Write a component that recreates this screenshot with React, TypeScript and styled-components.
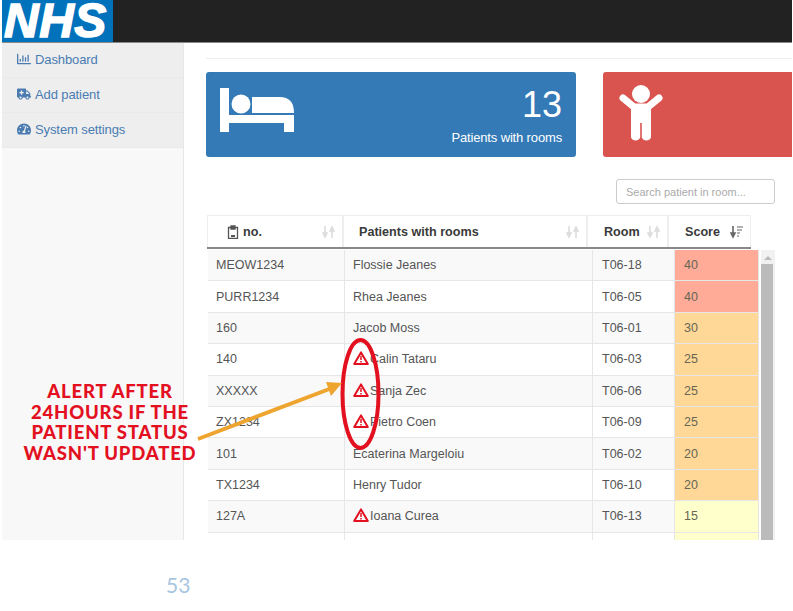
import React from 'react';
import styled, { createGlobalStyle } from 'styled-components';
import { FaAmbulance, FaTachometerAlt, FaRegChartBar } from 'react-icons/fa';

interface Patient {
  no: string;
  name: string;
  room: string;
  score: number | null;
  alert?: boolean;
}

const patients: Patient[] = [
  { no: 'MEOW1234', name: 'Flossie Jeanes', room: 'T06-18', score: 40 },
  { no: 'PURR1234', name: 'Rhea Jeanes', room: 'T06-05', score: 40 },
  { no: '160', name: 'Jacob Moss', room: 'T06-01', score: 30 },
  { no: '140', name: 'Calin Tataru', room: 'T06-03', score: 25, alert: true },
  { no: 'XXXXX', name: 'Sanja Zec', room: 'T06-06', score: 25, alert: true },
  { no: 'ZX1234', name: 'Pietro Coen', room: 'T06-09', score: 25, alert: true },
  { no: '101', name: 'Ecaterina Margeloiu', room: 'T06-02', score: 20 },
  { no: 'TX1234', name: 'Henry Tudor', room: 'T06-10', score: 20 },
  { no: '127A', name: 'Ioana Curea', room: 'T06-13', score: 15, alert: true },
  { no: '', name: '', room: '', score: null, alert: true },
];

const scoreColor = (score: number | null) => {
  if (score === null || score < 20) return '#ffffcc';
  if (score >= 40) return '#ffab97';
  return '#ffd898';
};

const SortIcon: React.FC<{ active?: boolean }> = ({ active }) => (
  <svg width="14" height="14" viewBox="0 0 14 14">
    <path d="M3 1v9M1 8l2 4 2-4z" stroke={active ? '#666' : '#ddd'} fill={active ? '#666' : '#ddd'} strokeWidth="1.6" />
    {active ? (
      <path d="M7 2h6M7 5h5M7 8h3M7 11h2" stroke="#999" strokeWidth="1.6" />
    ) : (
      <path d="M10 13V4M8 6l2-4 2 4z" stroke="#ddd" fill="#ddd" strokeWidth="1.6" />
    )}
  </svg>
);

const AlertIcon = () => (
  <svg width="16" height="14" viewBox="0 0 16 14">
    <path d="M8 1.4 14.8 13H1.2z" fill="#fff" stroke="#e3101f" strokeWidth="2" strokeLinejoin="round" />
    <path d="M8 5v4M8 10v1.6" stroke="#e3101f" strokeWidth="1.5" />
  </svg>
);

const App: React.FC = () => (
  <Page>
    <GlobalStyle />
    <Frame>
      <TopBar>
        <Logo>NHS</Logo>
      </TopBar>
      <Body>
        <Sidebar>
          <MenuItem><FaRegChartBar size={14} />Dashboard</MenuItem>
          <MenuItem><FaAmbulance size={14} />Add patient</MenuItem>
          <MenuItem><FaTachometerAlt size={14} />System settings</MenuItem>
        </Sidebar>
        <Main>
          <Rule />
          <Cards>
            <Card $color="#337ab7">
              <svg width="75" height="47" viewBox="0 0 75 47" fill="#fff">
                <path d="M1 3h9v27h65v17H65v-9H10v9H1z" />
                <circle cx="22" cy="19" r="9.5" />
                <path d="M33 12h28c9 0 14 5 14 16H33z" />
              </svg>
              <CardText>
                <CardNumber>13</CardNumber>
                <CardLabel>Patients with rooms</CardLabel>
              </CardText>
            </Card>
            <Card $color="#d9534f">
              <svg width="50" height="58" viewBox="0 0 50 58" fill="#fff">
                <circle cx="25" cy="9" r="9" />
                <path d="M7 13 18 22h14L43 13" stroke="#fff" strokeWidth="7" strokeLinecap="round" strokeLinejoin="round" fill="none" />
                <path d="M15 20h20v32.500a5 5 0 0 1-9.200 0V38h-1.600v14.500a5 5 0 0 1-9.200 0z" />
              </svg>
            </Card>
          </Cards>
          <SearchRow>
            <SearchInput placeholder="Search patient in room..." />
          </SearchRow>
          <TableArea>
            <HeadRow>
              <HeadCell $width={136}>
                <HeadLabel $indent={19}>
                  <svg width="12" height="14" viewBox="0 0 12 14">
                    <path d="M1.500 2.500h9v11h-9zM4 1h4v3H4z" fill="#fff" stroke="#555" strokeWidth="1.300" />
                    <path d="M4 10h4v2H4z" fill="#555" />
                  </svg>
                  no.
                </HeadLabel>
                <SortIcon />
              </HeadCell>
              <HeadCell $width={244}>
                <HeadLabel $indent={15}>Patients with rooms</HeadLabel>
                <SortIcon />
              </HeadCell>
              <HeadCell $width={81}>
                <HeadLabel $indent={16}>Room</HeadLabel>
                <SortIcon />
              </HeadCell>
              <HeadCell $width={83}>
                <HeadLabel $indent={16}>Score</HeadLabel>
                <SortIcon active />
              </HeadCell>
            </HeadRow>
            <ScrollArea>
              <Rows>
                {patients.map((p, i) => (
                  <Row key={i} $odd={i % 2 === 0}>
                    <NoCell>{p.no}</NoCell>
                    <NameCell>
                      {p.alert && <AlertIcon />}
                      {p.name}
                    </NameCell>
                    <RoomCell>{p.room}</RoomCell>
                    <ScoreCell $bg={scoreColor(p.score)}>{p.score}</ScoreCell>
                  </Row>
                ))}
              </Rows>
              <Scrollbar>
                <ScrollArrow />
                <ScrollThumb />
              </Scrollbar>
            </ScrollArea>
          </TableArea>
        </Main>
      </Body>
      <Annotation>
        <AlertNote>
          ALERT AFTER
          <br />
          24HOURS IF THE
          <br />
          PATIENT STATUS
          <br />
          WASN'T UPDATED
        </AlertNote>
        <Markup width="793" height="540" viewBox="0 0 793 540">
          <ellipse cx="360.500" cy="394" rx="18" ry="54" fill="none" stroke="#e3101f" strokeWidth="4" />
          <path d="M198 439 332 388" stroke="#eea52f" strokeWidth="4" />
          <path d="M342 383 326 382 331 396z" fill="#eea52f" />
        </Markup>
      </Annotation>
    </Frame>
    <Footer>
      <PageNumber>53</PageNumber>
    </Footer>
  </Page>
);

const GlobalStyle = createGlobalStyle`
  html, body {
    margin: 0;
    padding: 0;
    background: #fff;
  }
  * {
    box-sizing: border-box;
  }
`;

const Page = styled.div`
  width: 793px;
  height: 611px;
  overflow: hidden;
  background: #fff;
  font-family: 'Liberation Sans', Arial, sans-serif;
  font-size: 12.5px;
  color: #555;
`;

const Frame = styled.div`
  position: relative;
  width: 790px;
  height: 540px;
  margin-left: 2px;
  overflow: hidden;
`;

const TopBar = styled.div`
  display: flex;
  height: 43px;
  background: #222;
  border-bottom: 1px solid #8a8a8a;
`;

const Logo = styled.div`
  width: 111px;
  height: 42px;
  padding-left: 2px;
  background: #0072bc;
  color: #fff;
  font-size: 48px;
  font-weight: 700;
  font-style: italic;
  line-height: 42px;
  letter-spacing: 0.5px;
  -webkit-text-stroke: 1.5px #fff;
`;

const Body = styled.div`
  display: flex;
  height: 497px;
`;

const Sidebar = styled.div`
  flex: none;
  width: 182px;
  background: #f8f8f8;
  border-right: 1px solid #e7e7e7;
`;

const MenuItem = styled.div`
  display: flex;
  align-items: center;
  gap: 4px;
  height: 35px;
  padding: 0 0 2px 15px;
  background: #eee;
  border-bottom: 1px solid #e9e9e9;
  color: #4a7cb2;
  font-size: 13px;
  letter-spacing: -0.1px;
`;

const Main = styled.div`
  flex: 1;
  min-width: 0;
  padding-left: 22px;
  overflow: hidden;
`;

const Rule = styled.div`
  height: 1px;
  margin-top: 15px;
  background: #eee;
`;

const Cards = styled.div`
  display: flex;
  gap: 27px;
  margin-top: 13px;
`;

const Card = styled.div<{ $color: string }>`
  flex: none;
  display: flex;
  justify-content: space-between;
  width: 370px;
  height: 85px;
  padding: 13px 14px 0 13px;
  border-radius: 3px;
  background: ${(props) => props.$color};
  color: #fff;
`;

const CardText = styled.div`
  padding-top: 2px;
  text-align: right;
`;

const CardNumber = styled.div`
  font-size: 36px;
  line-height: 36px;
`;

const CardLabel = styled.div`
  margin-top: 7px;
  font-size: 13px;
  letter-spacing: -0.15px;
`;

const SearchRow = styled.div`
  display: flex;
  justify-content: flex-end;
  width: 569px;
  margin-top: 22px;
`;

const SearchInput = styled.input`
  width: 159px;
  height: 25px;
  padding: 0 9px;
  border: 1px solid #ccc;
  border-radius: 3px;
  font-family: inherit;
  font-size: 11px;
  &::placeholder {
    color: #aaa;
  }
`;

const TableArea = styled.div`
  margin: 11px 0 0 1px;
  width: 568px;
`;

const HeadRow = styled.div`
  display: flex;
  width: 544px;
  height: 34px;
  border-top: 1px solid #eee;
  border-bottom: 2px solid #888;
`;

const HeadCell = styled.div<{ $width: number }>`
  display: flex;
  align-items: center;
  justify-content: space-between;
  width: ${(props) => props.$width}px;
  padding-right: 6px;
  border-left: 1px solid #eee;
  border-right: 1px solid #eee;
`;

const HeadLabel = styled.div<{ $indent: number }>`
  display: flex;
  align-items: center;
  gap: 4px;
  padding-left: ${(props) => props.$indent}px;
  color: #3a3a3a;
  font-weight: 700;
  font-size: 12.6px;
`;

const ScrollArea = styled.div`
  display: flex;
  gap: 2px;
  margin-top: 1px;
`;

const Rows = styled.div`
  flex: none;
  width: 552px;
`;

const Row = styled.div<{ $odd: boolean }>`
  display: grid;
  grid-template-columns: 137px 248px 82px 84px;
  height: 31.4px;
  margin-left: 1px;
  background: ${(props) => (props.$odd ? '#f9f9f9' : '#fff')};
  border-bottom: 1px solid #e6e6e6;
`;

const BodyCell = styled.div`
  display: flex;
  align-items: center;
  padding-left: 8px;
  border-right: 1px solid #e6e6e6;
`;

const NoCell = styled(BodyCell)``;

const NameCell = styled(BodyCell)`
  gap: 1px;
  svg {
    margin-bottom: 2px;
  }
`;

const RoomCell = styled(BodyCell)`
  padding-left: 9px;
`;

const ScoreCell = styled(BodyCell)<{ $bg: string }>`
  padding-left: 9px;
  background: ${(props) => props.$bg};
  color: #665;
`;

const Scrollbar = styled.div`
  width: 14px;
  background: #f1f1f1;
`;

const ScrollArrow = styled.div`
  width: 0;
  height: 0;
  margin: 6px 0 4px 3px;
  border-left: 4px solid transparent;
  border-right: 4px solid transparent;
  border-bottom: 4px solid #bbb;
`;

const ScrollThumb = styled.div`
  width: 12px;
  height: 280px;
  background: #bbb;
`;

const Annotation = styled.div`
  position: absolute;
  inset: 0 0 0 -2px;
  pointer-events: none;
`;

const Markup = styled.svg`
  position: absolute;
  left: 0;
  top: 0;
`;

const AlertNote = styled.div`
  position: absolute;
  left: 10px;
  top: 381px;
  width: 200px;
  color: #e3101f;
  font-family: Lato, 'Liberation Sans', sans-serif;
  font-size: 18.5px;
  font-weight: 900;
  line-height: 20.7px;
  letter-spacing: 0.8px;
  text-align: center;
`;

const Footer = styled.div`
  display: flex;
  padding: 32px 0 0 166px;
`;

const PageNumber = styled.div`
  color: #a8c6e2;
  font-family: Lato, 'Open Sans', sans-serif;
  font-size: 21px;
  line-height: 26px;
`;

export default App;
